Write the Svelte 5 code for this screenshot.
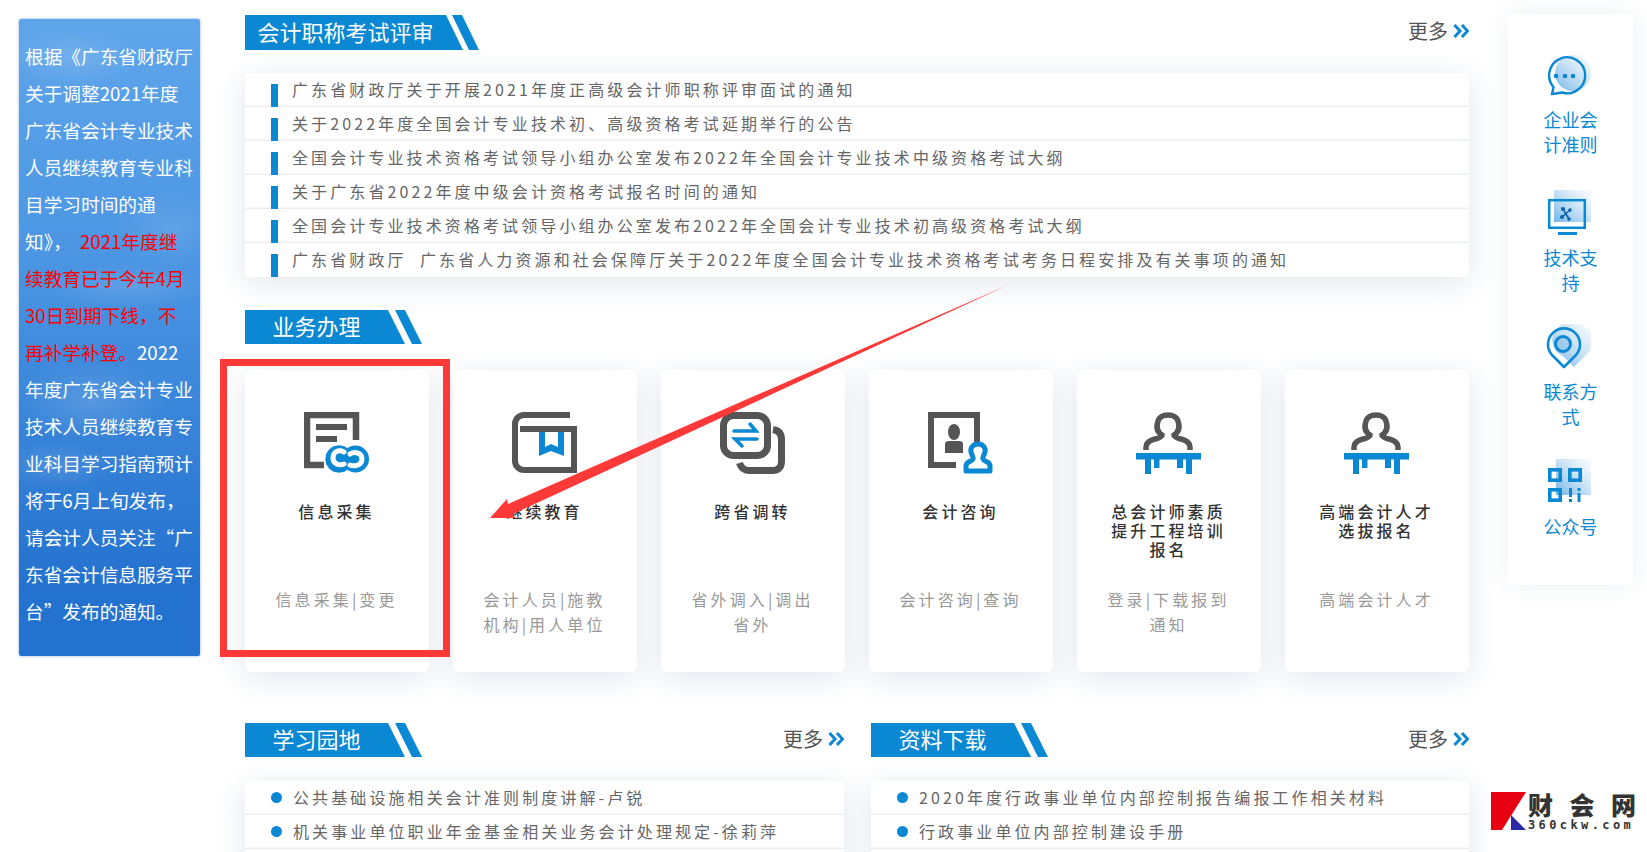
<script>
  const exams = [
    '广东省财政厅关于开展2021年度正高级会计师职称评审面试的通知',
    '关于2022年度全国会计专业技术初、高级资格考试延期举行的公告',
    '全国会计专业技术资格考试领导小组办公室发布2022年全国会计专业技术中级资格考试大纲',
    '关于广东省2022年度中级会计资格考试报名时间的通知',
    '全国会计专业技术资格考试领导小组办公室发布2022年全国会计专业技术初高级资格考试大纲',
    '广东省财政厅  广东省人力资源和社会保障厅关于2022年度全国会计专业技术资格考试考务日程安排及有关事项的通知'
  ];
  const services = [
    { icon: 'form', title: '信息采集', sub: '信息采集|变更' },
    { icon: 'book', title: '继续教育', sub: '会计人员|施教机构|用人单位' },
    { icon: 'swap', title: '跨省调转', sub: '省外调入|调出省外' },
    { icon: 'stamp', title: '会计咨询', sub: '会计咨询|查询' },
    { icon: 'desk', title: '总会计师素质提升工程培训报名', sub: '登录|下载报到通知' },
    { icon: 'desk', title: '高端会计人才选拔报名', sub: '高端会计人才' }
  ];
  const study = ['公共基础设施相关会计准则制度讲解-卢锐', '机关事业单位职业年金基金相关业务会计处理规定-徐莉萍', '\u00a0'];
  const files = ['2020年度行政事业单位内部控制报告编报工作相关材料', '行政事业单位内部控制建设手册', '\u00a0'];
  const side = [
    { icon: 'chat', label: '企业会计准则' },
    { icon: 'screen', label: '技术支持' },
    { icon: 'pin', label: '联系方式' },
    { icon: 'qr', label: '公众号' }
  ];
</script>

{#snippet more()}
  <a class="more">更多
    <svg width="16" height="14" viewBox="0 0 16 14"><path d="M1.500 1 7 7l-5.500 6M9 1l5.500 6L9 13" fill="none" stroke="#0a88d3" stroke-width="3" /></svg>
  </a>
{/snippet}

{#snippet head(title, wide)}
  <div class="head" class:wide>
    <h2>{title}</h2>
    <i></i>
  </div>
{/snippet}

<div class="page">
  <aside class="notice">
    根据《广东省财政厅<br />关于调整2021年度<br />广东省会计专业技术<br />人员继续教育专业科<br />目学习时间的通<br />知》，&nbsp;&nbsp;<span class="red">2021年度继<br />续教育已于今年4月<br />30日到期下线，不<br />再补学补登。</span>2022<br />年度广东省会计专业<br />技术人员继续教育专<br />业科目学习指南预计<br />将于6月上旬发布，<br />请会计人员关注“广<br />东省会计信息服务平<br />台”发布的通知。
  </aside>

  <main>
    <div class="bar">
      {@render head('会计职称考试评审', true)}
      {@render more()}
    </div>
    <ul class="list exams">
      {#each exams as item}
        <li><b></b>{item}</li>
      {/each}
    </ul>

    <div class="bar second">
      {@render head('业务办理', false)}
    </div>
    <div class="cards">
      {#each services as s}
        <div class="card">
          <svg class="ico" width="65" height="62" viewBox="0 0 65 62">
            {#if s.icon === 'form'}
              <path d="M52 28V3H3v50h17" fill="none" stroke="#555" stroke-width="6.500" />
              <path d="M12 12h31v6H12zM12 24h21v6H12z" fill="#555" />
              <circle cx="35" cy="47" r="14" fill="#0a88d3" stroke="#fff" stroke-width="1" />
              <circle cx="51.500" cy="47" r="13.500" fill="#0a88d3" />
              <circle cx="35" cy="47" r="13.500" fill="#0a88d3" />
              <path d="M40 40c-6-3-11 0-11 6s6 8 11 6M46 42c5-3 12-1 12 5s-7 8-12 6" fill="none" stroke="#fff" stroke-width="5" stroke-linecap="round" />
            {:else if s.icon === 'book'}
              <path d="M58 3H12a9 9 0 0 0-9 9v37a9 9 0 0 0 9 9h50V17H8" fill="none" stroke="#555" stroke-width="6" />
              <path d="M27 20v24l12-5 13 5V20h-6v15l-7-3-6 3V20z" fill="#0a88d3" />
            {:else if s.icon === 'swap'}
              <rect x="3.500" y="3.500" width="44" height="40" rx="10" fill="none" stroke="#555" stroke-width="7" />
              <path d="M53 17.500c6 1 8.500 5 8.500 10v22c0 6-3.500 9-9 9H29c-5 0-8-2.500-9.500-7.500" fill="none" stroke="#555" stroke-width="7" />
              <path d="M14 19h22l-6-7M37 27H15l7 7" fill="none" stroke="#0a88d3" stroke-width="3.500" stroke-linecap="round" />
            {:else if s.icon === 'stamp'}
              <path d="M49 30V3H3v50h25" fill="none" stroke="#555" stroke-width="6" />
              <ellipse cx="26" cy="20" rx="6" ry="8" fill="#555" />
              <path d="M17 32q0-3 4-3h10q4 0 4 3v9H17z" fill="#555" />
              <path d="M50 32c-5 0-8 4-7 8 .5 3 3 5 2 7-1 3-7 2-7 7v5h24v-5c0-5-6-4-7-7-1-2 1.500-4 2-7 1-4-2-8-7-8z" fill="#fff" stroke="#0a88d3" stroke-width="5" stroke-linejoin="round" />
            {:else}
              <path d="M10 38v-3c0-5 5-7 9-8 4-1 7-2 7-4-5-3-6-8-4-14 3-8 17-8 20 0 2 6 1 11-4 14 0 2 3 3 7 4 4 1 9 3 9 8v3" fill="none" stroke="#555" stroke-width="5.500" />
              <path d="M0 41h65v6.500H56V62h-6V47.500h-3V56h-6v-8.500H23.500V56H18v-8.500h-3V62H9V47.500H0z" fill="#0a88d3" />
            {/if}
          </svg>
          <h3>{s.title}</h3>
          <p>{s.sub}</p>
        </div>
      {/each}
    </div>

    <div class="columns">
      <section class="left-col">
        <div class="bar">
          {@render head('学习园地', false)}
          {@render more()}
        </div>
        <ul class="list dots">
          {#each study as item}
            <li><b></b>{item}</li>
          {/each}
        </ul>
      </section>
      <section class="right-col">
        <div class="bar">
          {@render head('资料下载', false)}
          {@render more()}
        </div>
        <ul class="list dots">
          {#each files as item}
            <li><b></b>{item}</li>
          {/each}
        </ul>
      </section>
    </div>
  </main>

  <nav class="side">
    <svg width="0" height="0" class="defs">
      <defs>
        <linearGradient id="fade" x1="0" y1="1" x2="1" y2="0">
          <stop offset="0" stop-color="#4d9fe0" stop-opacity=".8" />
          <stop offset="1" stop-color="#a9d2f0" stop-opacity=".08" />
        </linearGradient>
      </defs>
    </svg>
    {#each side as n}
      <a class="side-item">
        <svg width="45" height="45" viewBox="0 0 45 45">
          {#if n.icon === 'chat'}
            <circle cx="27" cy="18" r="18" fill="url(#fade)" />
            <path d="M6 39l1.500-7A18 18 0 1 1 16 37.500C12 38 9 39 6 39z" fill="none" stroke="#0a88d3" stroke-width="2.400" />
            <circle cx="10" cy="21" r="2.300" fill="#0a88d3" />
            <circle cx="19" cy="21" r="2.300" fill="#0a88d3" />
            <circle cx="27" cy="21" r="2.300" fill="#0a88d3" />
          {:else if n.icon === 'screen'}
            <rect x="8" y="0" width="37" height="32" fill="url(#fade)" />
            <rect x="3.200" y="10.200" width="35.600" height="27.600" fill="none" stroke="#0a88d3" stroke-width="2.500" />
            <path d="M12 42h19v3H12z" fill="#0a88d3" />
            <path d="M17 19l6 10M24 20l-8 7" stroke="#0a5fa8" stroke-width="1.500" />
            <circle cx="17" cy="19" r="2" fill="#0a5fa8" />
            <circle cx="24" cy="20" r="1.700" fill="#0a5fa8" />
            <circle cx="16" cy="27" r="2" fill="#0a5fa8" />
            <circle cx="23" cy="29" r="1.700" fill="#0a5fa8" />
          {:else if n.icon === 'pin'}
            <path d="M30 0a17 17 0 0 1 12 29L28 43 17 32A17 17 0 0 1 30 0z" fill="url(#fade)" />
            <path d="M18 43L6 31A16 16 0 1 1 30 31z" fill="none" stroke="#0a88d3" stroke-width="2.600" stroke-linejoin="round" />
            <circle cx="17" cy="20" r="7.500" fill="#8cc0e8" fill-opacity=".5" stroke="#0a88d3" stroke-width="3" />
          {:else}
            <rect x="10" y="0" width="35" height="36" fill="url(#fade)" />
            <g fill="none" stroke="#0a88d3" stroke-width="3.600">
              <rect x="3.800" y="10.800" width="10.400" height="10.400" />
              <rect x="23.800" y="10.800" width="10.400" height="10.400" />
              <rect x="3.800" y="30.800" width="10.400" height="10.400" />
            </g>
            <path d="M23 29h3v9h-3zM23 40h3v3h-3zM31.500 29h3v3h-3zM31.500 34h3v9h-3z" fill="#0a88d3" />
          {/if}
        </svg>
        <span>{n.label}</span>
      </a>
    {/each}
  </nav>

  <svg class="markup" width="1647" height="852" viewBox="0 0 1647 852">
    <rect x="223.500" y="362.500" width="223" height="291" fill="none" stroke="#ff3838" stroke-width="7" />
    <polygon points="490,518 507,499 508,504 1008,285 513,514 515,518" fill="#ff3838" />
  </svg>

  <div class="logo">
    <svg width="35" height="38" viewBox="0 0 35 38">
      <polygon points="0,0 35,0 11,38 0,38" fill="#e60012" />
      <polygon points="20,23 35,38 20,38" fill="#2a2aa8" />
    </svg>
    <div class="logo-text">
      <strong><span>财</span><span>会</span><span>网</span></strong>
      <em>360ckw.com</em>
    </div>
  </div>
</div>

<style>
  :global(body) {
    background: #fff;
  }

  .page {
    position: relative;
    display: flex;
    align-items: flex-start;
    width: 1647px;
    height: 852px;
    overflow: hidden;
    background: #fff;
    font-family: "Noto Sans CJK SC", "Liberation Sans", sans-serif;
  }

  .notice {
    box-sizing: border-box;
    flex: none;
    width: 181px;
    height: 637px;
    margin: 19px 0 0 19px;
    padding: 18px 0 0 6px;
    border-radius: 2px;
    color: #fff;
    font-size: 18.67px;
    line-height: 37px;
    white-space: nowrap;
    box-shadow: 0 0 3px rgba(40, 100, 180, .5);
    background:
      radial-gradient(ellipse 70px 30px at 30% 6%, rgba(255, 255, 255, .14), transparent),
      radial-gradient(ellipse 60px 40px at 85% 33%, rgba(255, 255, 255, .1), transparent),
      radial-gradient(ellipse 90px 22px at 60% 42%, rgba(255, 255, 255, .12), transparent),
      radial-gradient(ellipse 80px 40px at 40% 60%, rgba(255, 255, 255, .15), transparent),
      radial-gradient(ellipse 60px 25px at 20% 70%, rgba(255, 255, 255, .12), transparent),
      linear-gradient(#5ea5ea, #4a94e2 40%, #3a86da 60%, #2472cf 90%);
  }

  .red {
    color: #f00;
  }

  main {
    flex: none;
    width: 1224px;
    margin: 15px 0 0 45px;
  }

  .bar {
    display: flex;
    justify-content: space-between;
    align-items: center;
  }

  .second {
    margin-top: 33px;
  }

  .head {
    display: flex;
  }

  .head h2 {
    box-sizing: border-box;
    width: 160px;
    height: 34px;
    margin: 0;
    padding-right: 17px;
    background: #0a88d3;
    color: #fff;
    font-size: 22px;
    font-weight: 400;
    line-height: 31px;
    text-align: center;
    clip-path: polygon(0 0, calc(100% - 17px) 0, 100% 100%, 0 100%);
  }

  .head i {
    width: 27px;
    margin-left: -10px;
    background: #0a88d3;
    clip-path: polygon(0 0, 10px 0, 100% 100%, 17px 100%);
  }

  .head.wide h2 {
    width: 218px;
    height: 35px;
    line-height: 32px;
  }

  .head.wide i {
    margin-left: -11px;
  }

  .more {
    display: flex;
    align-items: center;
    gap: 5px;
    margin-bottom: 3px;
    color: #555;
    font-size: 20px;
    line-height: 26px;
  }

  .list {
    margin: 23px 0 0;
    padding: 0;
    list-style: none;
    overflow: hidden;
    border-radius: 3px;
    background: #fff;
    box-shadow: 0 6px 30px rgba(40, 80, 130, .14);
    color: #666;
    font-size: 16px;
    line-height: 20px;
    letter-spacing: 3.100px;
  }

  .list li {
    box-sizing: border-box;
    display: flex;
    align-items: center;
    height: 34px;
    padding-bottom: 2px;
    white-space: pre;
    box-shadow: inset 0 -1.500px 0 #eceef1;
  }

  .list li:last-child {
    box-shadow: none;
  }

  .exams {
    width: 1224px;
  }

  .exams b {
    align-self: flex-end;
    flex: none;
    width: 7px;
    height: 23px;
    margin: 0 14px -2px 26px;
    background: #0a88d3;
  }

  .cards {
    display: flex;
    gap: 24px;
    margin-top: 26px;
  }

  .card {
    box-sizing: border-box;
    flex: none;
    width: 184px;
    height: 302px;
    padding: 42px 29px 0 28px;
    border-radius: 6px;
    background: #fff;
    box-shadow: 0 6px 30px rgba(40, 80, 130, .14);
    text-align: center;
  }

  .ico {
    display: block;
    margin: 0 auto;
  }

  .card h3 {
    height: 85px;
    margin: 28px 0 0;
    color: #333;
    font-size: 16px;
    font-weight: 500;
    line-height: 19px;
    letter-spacing: 3.100px;
  }

  .card p {
    margin: 0;
    color: #999;
    font-size: 16px;
    line-height: 25px;
    letter-spacing: 3.100px;
  }

  .columns {
    display: flex;
    justify-content: space-between;
    margin-top: 51px;
  }

  .left-col {
    width: 599px;
  }

  .right-col {
    width: 598px;
  }

  .dots {
    margin-top: 24px;
  }

  .dots b {
    flex: none;
    width: 11px;
    height: 11px;
    margin: 0 11px 0 26px;
    border-radius: 50%;
    background: #0a88d3;
  }

  .dots li:last-child b {
    display: none;
  }

  .side {
    box-sizing: border-box;
    flex: none;
    width: 125px;
    height: 571px;
    margin: 14px 0 0 39px;
    padding-top: 41px;
    border-radius: 4px;
    background: #fff;
    box-shadow: 0 0 24px rgba(60, 90, 130, .09);
  }

  .defs {
    display: block;
    height: 0;
  }

  .side-item {
    display: block;
    height: 134.500px;
    color: #0a88d3;
    font-size: 18px;
    line-height: 25px;
    text-align: center;
  }

  .side-item svg {
    display: block;
    margin-left: 37.500px;
  }

  .side-item span {
    display: block;
    width: 55px;
    margin: 10px auto 0;
  }

  .side-item:first-of-type span {
    margin-top: 7px;
  }

  .markup {
    position: absolute;
    top: 0;
    left: 0;
    pointer-events: none;
  }

  .logo {
    position: absolute;
    left: 1491px;
    top: 792px;
    display: flex;
    gap: 2px;
    padding-bottom: 20px;
    background: #fff;
    box-shadow: 0 0 0 2px #fff;
  }

  .logo svg {
    display: block;
  }

  .logo-text {
    width: 108px;
    color: #333;
  }

  .logo-text strong {
    display: flex;
    justify-content: space-between;
    height: 27px;
    font-size: 25px;
    font-weight: 900;
    line-height: 25px;
  }

  .logo-text em {
    display: block;
    font-family: "DejaVu Sans Mono", monospace;
    font-size: 12px;
    font-style: normal;
    font-weight: 700;
    line-height: 12px;
    letter-spacing: 3.400px;
    white-space: nowrap;
  }
</style>
